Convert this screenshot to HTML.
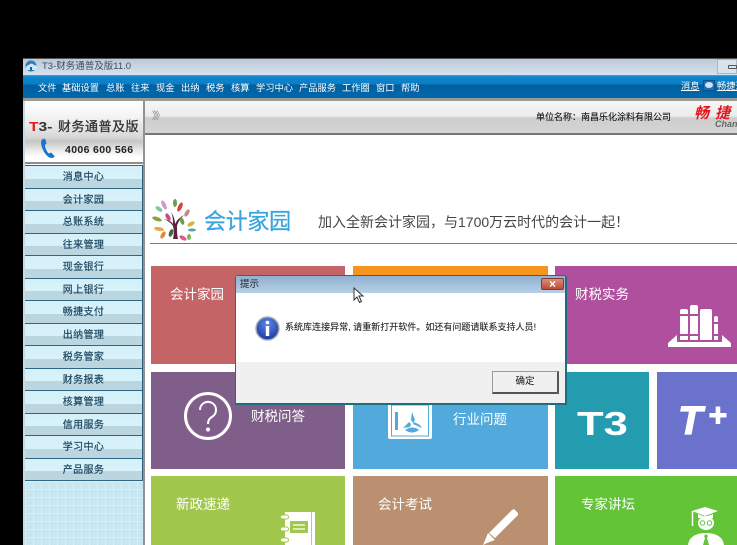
<!DOCTYPE html>
<html><head><meta charset="utf-8">
<style>
html,body{margin:0;padding:0;background:#000;width:737px;height:545px;overflow:hidden}
body{position:relative;font-family:"Liberation Sans","Noto Sans CJK SC",sans-serif}
.a{position:absolute}
.t{position:absolute;white-space:nowrap;line-height:1}
.m{position:absolute;top:82px;color:#fff;font-size:9.25px;line-height:12px;white-space:nowrap}
.s{position:absolute;left:25px;width:118px;height:22.5px;box-sizing:border-box;border-top:1px solid #2f6683;border-right:1px solid #2f5f78;background:linear-gradient(#d5f0f8 0,#d8f2fa 58%,#bad6e0 58%,#bcd6e0 100%);color:#1d4660;font-size:10px;line-height:24px;text-align:center;letter-spacing:.4px;-webkit-text-stroke:.2px #1d4660}
.tile{position:absolute;overflow:hidden}
.tt{position:absolute;color:#fff;font-size:13.5px;line-height:16px;white-space:nowrap}
</style></head><body>

<!-- window -->
<div class="a" style="left:23px;top:58px;width:714px;height:487px;background:#fff"></div>
<div class="a" style="left:23px;top:58px;width:714px;height:17px;background:linear-gradient(#bcc9d8,#d6e2ee);border-top:1px solid #555;box-sizing:border-box"></div>
<svg class="a" style="left:24px;top:59px" width="14" height="14" viewBox="0 0 14 14"><circle cx="7" cy="7" r="5.5" fill="#2a7fb8"/><path d="M2 9a3 3 0 0 1 3-3 3 3 0 0 1 5 0 2.5 2.5 0 0 1 1 5H4a2 2 0 0 1-2-2z" fill="#cfe6f5"/><path d="M6 11V8h2v3z" fill="#1d5f93"/></svg>
<div class="t" style="left:42px;top:62px;font-size:9.5px;color:#3f4c5a">T3-财务通普及版11.0</div>
<div class="a" style="left:717px;top:59px;width:20px;height:15px;background:#d9e3ec;border:1px solid #aab6c2;box-sizing:border-box"></div>
<div class="a" style="left:728px;top:65px;width:9px;height:4px;border:1px solid #555;border-radius:1px;box-sizing:border-box"></div>

<!-- menu -->
<div class="a" style="left:23px;top:75px;width:714px;height:23px;background:linear-gradient(#38a6e2 0,#0f85cc 8%,#0a7fc8 40%,#00609f 42%,#0068ac 100%)"></div>
<div class="a" style="left:23px;top:98px;width:714px;height:3px;background:#9a9a9a"></div>
<div class="m" style="left:38px">文件</div>
<div class="m" style="left:62px">基础设置</div>
<div class="m" style="left:106px">总账</div>
<div class="m" style="left:131px">往来</div>
<div class="m" style="left:156px">现金</div>
<div class="m" style="left:181px">出纳</div>
<div class="m" style="left:206px">税务</div>
<div class="m" style="left:231px">核算</div>
<div class="m" style="left:256px">学习中心</div>
<div class="m" style="left:299px">产品服务</div>
<div class="m" style="left:342px">工作圈</div>
<div class="m" style="left:376px">窗口</div>
<div class="m" style="left:401px">帮助</div>
<div class="m" style="left:681px;top:80px;text-decoration:underline">消息</div>
<div class="a" style="left:703px;top:80px;width:12px;height:11px;background:#1c6fb5;border:1px solid #0b4f90;box-sizing:border-box"></div>
<div class="a" style="left:705px;top:82px;width:8px;height:6px;background:#cfe4f2;border-radius:50%"></div>
<div class="m" style="left:717px;top:80px;text-decoration:underline">畅捷通</div>

<!-- sidebar -->
<div class="a" style="left:23px;top:101px;width:2px;height:444px;background:#c8dbe4"></div>
<div class="a" style="left:143px;top:101px;width:2px;height:444px;background:#8d9499"></div>
<div class="a" style="left:25px;top:101px;width:118px;height:63px;background:linear-gradient(#fff 0,#f4f4f4 25%,#d9d9d9 58%,#c6c6c6 66%,#e8e8e8 80%,#fff 92%);border-bottom:2px solid #8e8e8e;box-sizing:border-box"></div>
<div class="t" style="left:29px;top:121px;font-size:12.5px;font-weight:bold;color:#e0191c;transform:scaleX(1.25);transform-origin:left">T<span style="color:#333">3-</span></div>
<div class="t" style="left:58px;top:120px;font-size:13px;color:#333;letter-spacing:.5px;-webkit-text-stroke:.3px #333">财务通普及版</div>
<svg class="a" style="left:40px;top:138px" width="16" height="21" viewBox="0 0 16 21"><path d="M2 1.5C1 2.5.8 5 1.6 8c.9 3.6 3.2 8 6.6 10.8 1.5 1.2 3.4 1.6 5.2.8.8-.4 1.300-1 1.100-1.600l-3-3.100c-.5-.4-1-.3-1.700.2-.8.4-1.500.1-2-.6C6.400 12.500 5.400 10.300 5 8.200c-.2-1 0-1.500.700-1.800.5-.3.8-.7.7-1.400L5.300 1C5 .5 3 .7 2 1.500z" fill="#1673d2"/></svg>
<div class="t" style="left:65px;top:145px;font-size:10.5px;font-weight:bold;color:#222;letter-spacing:.35px">4006 600 566</div>

<div class="s" style="top:165px">消息中心</div>
<div class="s" style="top:187.5px">会计家园</div>
<div class="s" style="top:210px">总账系统</div>
<div class="s" style="top:232.5px">往来管理</div>
<div class="s" style="top:255px">现金银行</div>
<div class="s" style="top:277.5px">网上银行</div>
<div class="s" style="top:300px">畅捷支付</div>
<div class="s" style="top:322.5px">出纳管理</div>
<div class="s" style="top:345px">税务管家</div>
<div class="s" style="top:367.5px">财务报表</div>
<div class="s" style="top:390px">核算管理</div>
<div class="s" style="top:412.5px">信用服务</div>
<div class="s" style="top:435px">学习中心</div>
<div class="s" style="top:457.5px;height:23.5px;border-bottom:1px solid #2f6683">产品服务</div>
<div class="a" style="left:25px;top:481px;width:118px;height:64px;background-color:#c8e6f0;background-image:linear-gradient(#d8eff6 1px,transparent 1px),linear-gradient(90deg,#d8eff6 1px,transparent 1px);background-size:8px 8px"></div>

<!-- top banner -->
<div class="a" style="left:145px;top:101px;width:592px;height:33px;background:linear-gradient(#f6f6f6 0,#ececec 45%,#cdcdcd 52%,#d6d6d6 100%)"></div>
<div class="a" style="left:145px;top:133px;width:592px;height:2px;background:#777"></div>
<div class="t" style="left:152px;top:112px;font-size:10px;color:#888;letter-spacing:-2px">》》</div>
<div class="t" style="left:536px;top:113px;font-size:9px;color:#111;-webkit-text-stroke:.1px #111">单位名称：南昌乐化涂料有限公司</div>
<div class="t" style="left:694px;top:106px;font-size:15px;font-weight:bold;font-style:italic;color:#e3141c;letter-spacing:6px">畅捷</div>
<div class="t" style="left:715px;top:120px;font-size:9px;font-weight:bold;font-style:italic;color:#666">Chan</div>

<!-- logo row -->
<svg class="a" style="left:150px;top:197px" width="48" height="46" viewBox="0 0 48 46">
<path d="M23 42c1-5 1-9 0-13-2-3-5-5-9-7 4 1 7 2 9 5 0-4 0-7-2-12 2 3 4 7 4 12 2-4 5-7 9-9-3 3-6 7-7 11 0 5 0 9 1 13z" fill="#5b2340"/>
<g>
<ellipse cx="14" cy="8" rx="2" ry="5" fill="#c89bc9" transform="rotate(-25 14 8)"/>
<ellipse cx="25" cy="6" rx="2" ry="4" fill="#6f9b55"/>
<ellipse cx="30" cy="10" rx="2" ry="5" fill="#d8403c" transform="rotate(25 30 10)"/>
<ellipse cx="9" cy="12" rx="2" ry="4" fill="#7fc6a5" transform="rotate(-55 9 12)"/>
<ellipse cx="7" cy="22" rx="5" ry="2" fill="#86a63c" transform="rotate(20 7 22)"/>
<ellipse cx="9" cy="32" rx="5" ry="2" fill="#e8a948" transform="rotate(10 9 32)"/>
<ellipse cx="13" cy="38" rx="2" ry="4" fill="#d98a3b" transform="rotate(30 13 38)"/>
<ellipse cx="18" cy="20" rx="2" ry="4" fill="#c64d7e" transform="rotate(-30 18 20)"/>
<ellipse cx="37" cy="16" rx="2" ry="4" fill="#c9858a" transform="rotate(30 37 16)"/>
<ellipse cx="32" cy="24" rx="2" ry="4" fill="#6f9b55" transform="rotate(-20 32 24)"/>
<ellipse cx="41" cy="27" rx="4" ry="2" fill="#d8b23c" transform="rotate(-30 41 27)"/>
<ellipse cx="42" cy="33" rx="4" ry="1.5" fill="#4fa6a8"/>
<ellipse cx="33" cy="41" rx="4" ry="2" fill="#e2588c" transform="rotate(30 33 41)"/>
<ellipse cx="39" cy="40" rx="2" ry="3" fill="#7fb35a"/>
<ellipse cx="21" cy="36" rx="2" ry="4" fill="#3f6b3a" transform="rotate(20 21 36)"/>
</g></svg>
<div class="t" style="left:204px;top:211px;font-size:22px;color:#39a5df;letter-spacing:-.3px;-webkit-text-stroke:.3px #39a5df">会计家园</div>
<div class="t" style="left:318px;top:215px;font-size:14px;color:#444">加入全新会计家园，与1700万云时代的会计一起！</div>
<div class="a" style="left:150px;top:243px;width:587px;height:1px;background:#6480a8"></div>

<!-- tiles -->
<div class="tile" style="left:151px;top:266px;width:194px;height:98px;background:#c56466"><div class="tt" style="left:19px;top:21px">会计家园</div></div>
<div class="tile" style="left:353px;top:266px;width:195px;height:98px;background:#f7941e"></div>
<div class="tile" style="left:555px;top:266px;width:182px;height:98px;background:#b04f9e">
<div class="tt" style="left:20px;top:21px">财税实务</div>
</div>
<svg class="a" style="left:668px;top:305px" width="63" height="42" viewBox="0 0 63 42" fill="#fff">
<path d="M12 6q0-2 2-2h4q2 0 2 2v3h-8zM12 11h8v18h-8zM12 31h8v4h-8zM22 2q0-2 2-2h4q2 0 2 2v7h-8zM22 11h8v18h-8zM22 31h8v4h-8z"/>
<path d="M32 6q0-2 2-2h8q2 0 2 2v29H32zM46 13q0-2 2-2t2 2v4h-4zM46 19h4v10h-4zM46 31h4v4h-4z"/>
<path d="M9 30L0 38v4h63v-4l-9-8v7H9z"/>
</svg>
<div class="tile" style="left:151px;top:372px;width:194px;height:97px;background:#7f5f8a">
<svg class="a" style="left:32px;top:18.5px" width="50" height="50" viewBox="0 0 50 50"><circle cx="25" cy="25" r="22.5" fill="none" stroke="#fff" stroke-width="3"/><path d="M17 19a8 8 0 1 1 12.500 6.500C26.500 27.500 25 29 25 33" fill="none" stroke="#fff" stroke-width="2"/><circle cx="25" cy="38.5" r="2" fill="#fff"/></svg>
<div class="tt" style="left:100px;top:37px">财税问答</div></div>
<div class="tile" style="left:353px;top:372px;width:195px;height:97px;background:#52a9dc">
<svg class="a" style="left:35px;top:30px" width="45" height="38" viewBox="0 0 45 38"><rect x="0" y="0" width="44" height="37" rx="2" fill="#fff"/><rect x="3.500" y="3" width="37" height="31" fill="#fff" stroke="#52a9dc"/><rect x="7" y="10" width="3" height="18" fill="#52a9dc"/><path d="M24 10l3 8-2 3-2-3zM15 26l6-6 2 2-1 3zM34 26l-9-4 1-2 6 3zM17 28q8-5 14 0q-7 5-14 0z" fill="#52a9dc"/></svg>
<div class="tt" style="left:100px;top:40px">行业问题</div></div>
<div class="tile" style="left:555px;top:372px;width:94px;height:97px;background:#229cae"><div class="t" style="left:22px;top:35px;font-size:33px;font-weight:bold;color:#fff;transform:scaleX(1.32);transform-origin:left">T3</div></div>
<div class="tile" style="left:657px;top:372px;width:80px;height:97px;background:#6a72cc"><div class="t" style="left:21px;top:29px;font-size:40px;font-weight:bold;font-style:italic;color:#fff;-webkit-text-stroke:1.2px #fff">T</div><div class="t" style="left:51px;top:27px;font-size:32px;font-weight:bold;font-style:italic;color:#fff;-webkit-text-stroke:1px #fff">+</div></div>
<div class="tile" style="left:151px;top:476px;width:194px;height:69px;background:#a1c74d"><div class="tt" style="left:25px;top:21px">新政速递</div>
<svg class="a" style="left:129px;top:35px" width="36" height="34" viewBox="0 0 36 34"><path d="M5 1h29q1 0 1 1v32H5z" fill="#fff"/><rect x="0.500" y="4" width="8" height="4" rx="2" fill="#fff" stroke="#a1c74d"/><rect x="0.500" y="16" width="8" height="4" rx="2" fill="#fff" stroke="#a1c74d"/><rect x="0.500" y="27" width="8" height="4" rx="2" fill="#fff" stroke="#a1c74d"/><path d="M10 10h18v12H10z" fill="#a1c74d"/><path d="M13 14h12M13 18h12" stroke="#fff" stroke-width="1.2"/><path d="M31.500 1v33" stroke="#a1c74d" stroke-width=".8"/></svg></div>
<div class="tile" style="left:353px;top:476px;width:195px;height:69px;background:#ba9070"><div class="tt" style="left:25px;top:21px">会计考试</div>
<svg class="a" style="left:126px;top:30px" width="44" height="39" viewBox="0 0 44 39"><path d="M33 4l2-1 4 4 0 2-23 23-6-5zM9 27l7 7-8 3-4 2z" fill="#fff"/></svg></div>
<div class="tile" style="left:555px;top:476px;width:182px;height:69px;background:#63c437"><div class="tt" style="left:26px;top:21px">专家讲坛</div>
<svg class="a" style="left:133px;top:27px" width="36" height="42" viewBox="0 0 36 42"><path d="M17 4l13 4-13 5-13-5z" fill="#fff"/><path d="M10 11v4h15v-4l-8 3z" fill="#fff"/><path d="M4.500 8v15" stroke="#fff" stroke-width="1.500"/><ellipse cx="18" cy="20" rx="8" ry="7" fill="#fff"/><circle cx="14.500" cy="20" r="2.200" fill="none" stroke="#63c437"/><circle cx="21.500" cy="20" r="2.200" fill="none" stroke="#63c437"/><path d="M0 42c1-8 8-12 18-12s17 4 18 12z" fill="#fff"/><path d="M18 31l2 2-1 2 2 7h-6l2-7-1-2z" fill="#63c437"/></svg></div>

<!-- dialog -->
<div class="a" style="left:235px;top:275px;width:332px;height:130px;background:#f0f0f0;border:1px solid #1d6f7e;border-right:2px solid #1d6f7e;border-bottom:2px solid #1d6f7e;box-sizing:border-box;border-radius:3px 3px 0 0">
<div class="a" style="left:0;top:0;width:329px;height:17px;background:linear-gradient(#8fb0d0,#b8cfe6);"></div>
<div class="a" style="left:0;top:17px;width:329px;height:69px;background:#fff"></div>
<div class="t" style="left:4px;top:4px;font-size:9.5px;color:#222">提示</div>
<div class="a" style="left:305px;top:2px;width:23px;height:12px;box-sizing:border-box;background:linear-gradient(#dd8c7c,#c04b35);border:1px solid #7a3c33;border-radius:2px;color:#fff;font-size:12px;line-height:10px;text-align:center;font-weight:bold">×</div>
<svg class="a" style="left:19px;top:40px" width="25" height="25" viewBox="0 0 25 25"><defs><radialGradient id="g" cx=".5" cy=".3" r=".8"><stop offset="0" stop-color="#5f86e6"/><stop offset="1" stop-color="#102f96"/></radialGradient></defs><circle cx="12.5" cy="12.5" r="11.5" fill="url(#g)" stroke="#a4acb8" stroke-width="1.5"/><circle cx="12.500" cy="6.500" r="1.800" fill="#fff"/><path d="M10.800 10h3.400v10h-3.400z" fill="#fff"/></svg>
<div class="t" style="left:49px;top:47px;font-size:9px;letter-spacing:.02px;color:#222;-webkit-text-stroke:.1px #222">系统库连接异常, 请重新打开软件。如还有问题请联系支持人员!</div>
<div class="a" style="left:256px;top:95px;width:67px;height:23px;box-sizing:border-box;background:#f0f0f0;border:1px solid #9a9a9a;border-right:2px solid #555;border-bottom:2px solid #555;font-size:9.5px;line-height:20px;text-align:center;color:#111">确定</div>
</div>

<!-- cursor -->
<svg class="a" style="left:353px;top:287px" width="12" height="17" viewBox="0 0 12 17"><path d="M1 1v12l3-3 2.500 5.500 2-1L6 9h4z" fill="#fff" stroke="#333" stroke-width="1"/></svg>
</body></html>
